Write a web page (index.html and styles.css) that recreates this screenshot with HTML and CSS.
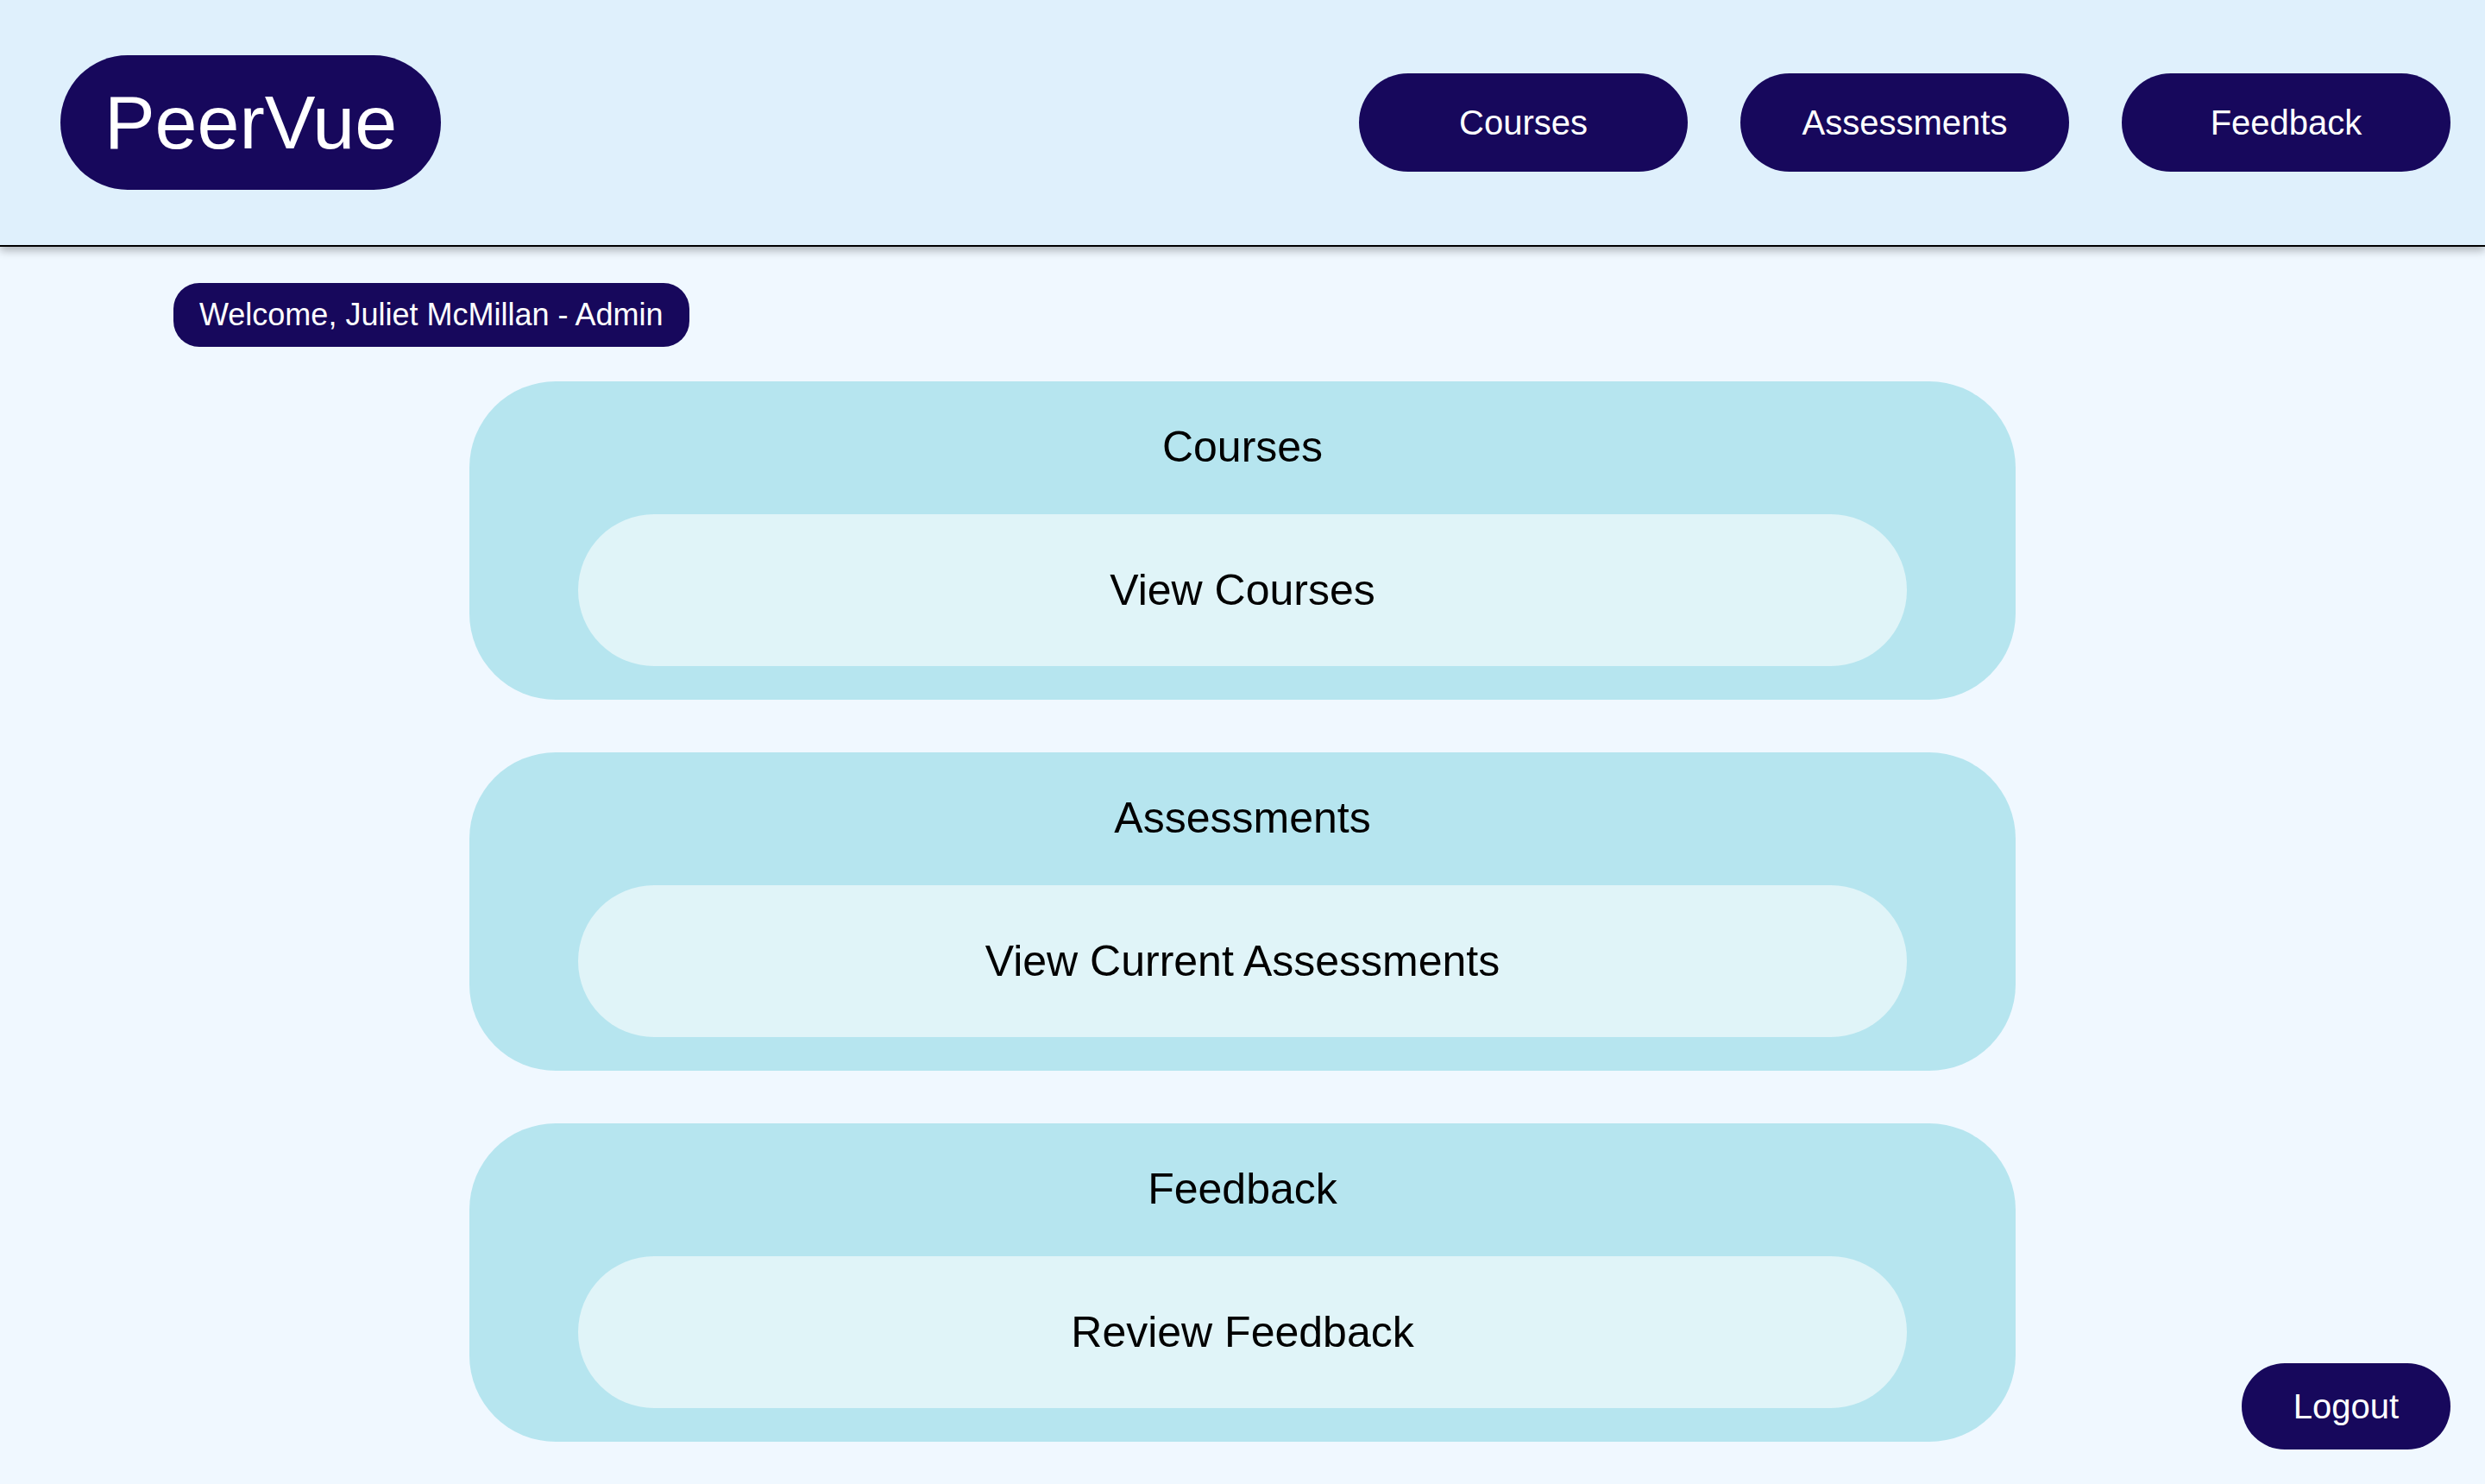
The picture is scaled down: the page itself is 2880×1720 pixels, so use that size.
FILE: index.html
```html
<!DOCTYPE html>
<html lang="en">
<head>
<meta charset="utf-8">
<title>PeerVue</title>
<link rel="stylesheet" href="styles.css">
</head>
<body>
<header class="topbar">
  <div class="logo">PeerVue</div>
  <nav class="nav">
    <a class="nav-btn" href="#">Courses</a>
    <a class="nav-btn" href="#">Assessments</a>
    <a class="nav-btn" href="#">Feedback</a>
  </nav>
</header>
<div class="welcome">Welcome, Juliet McMillan - Admin</div>
<main class="sections">
  <section class="card">
    <h2 class="card-title">Courses</h2>
    <a class="card-action" href="#">View Courses</a>
  </section>
  <section class="card">
    <h2 class="card-title">Assessments</h2>
    <a class="card-action" href="#">View Current Assessments</a>
  </section>
  <section class="card">
    <h2 class="card-title">Feedback</h2>
    <a class="card-action" href="#">Review Feedback</a>
  </section>
</main>
<a class="logout" href="#">Logout</a>
</body>
</html>
```

FILE: styles.css
```css
html, body {
  margin: 0;
  padding: 0;
}
body {
  background: #f0f8ff;
  font-family: "Liberation Sans", Arial, sans-serif;
  color: #000;
}
.topbar {
  height: 286px;
  box-sizing: border-box;
  display: flex;
  align-items: center;
  justify-content: space-between;
  padding: 0 40px 0 70px;
  background: #dff0fc;
  border-bottom: 2px solid #000;
  box-shadow: 0 4px 10px rgba(0, 0, 0, 0.3);
  position: relative;
}
.logo {
  background: #17085c;
  color: #fff;
  font-size: 88px;
  line-height: 101px;
  height: 156px;
  box-sizing: border-box;
  padding: 27px 50px;
  border-radius: 78px;
  width: 441px;
  text-align: center;
}
.nav {
  display: flex;
  gap: 61px;
}
.nav-btn {
  display: flex;
  align-items: center;
  justify-content: center;
  width: 381px;
  height: 114px;
  background: #17085c;
  color: #fff;
  text-decoration: none;
  font-size: 40px;
  border-radius: 57px;
}
.welcome {
  display: inline-block;
  margin: 42px 0 0 201px;
  background: #17085c;
  color: #fff;
  font-size: 36px;
  line-height: 41px;
  padding: 16px 30px 17px;
  border-radius: 30px;
}
.sections {
  display: flex;
  flex-direction: column;
  align-items: center;
  gap: 61px;
  margin-top: 40px;
}
.card {
  width: 1792px;
  box-sizing: border-box;
  background: #b6e5ef;
  border-radius: 100px;
  padding: 48px 126px 39px;
  display: flex;
  flex-direction: column;
  align-items: stretch;
}
.card-title {
  margin: 0 0 49px;
  font-weight: normal;
  font-size: 50px;
  line-height: 57px;
  text-align: center;
}
.card-action {
  display: flex;
  align-items: center;
  justify-content: center;
  height: 176px;
  background: #e0f4f8;
  border-radius: 88px;
  color: #000;
  text-decoration: none;
  font-size: 50px;
}
.logout {
  position: fixed;
  right: 40px;
  bottom: 40px;
  display: flex;
  align-items: center;
  justify-content: center;
  width: 242px;
  height: 100px;
  background: #17085c;
  color: #fff;
  text-decoration: none;
  font-size: 40px;
  border-radius: 50px;
}
```
